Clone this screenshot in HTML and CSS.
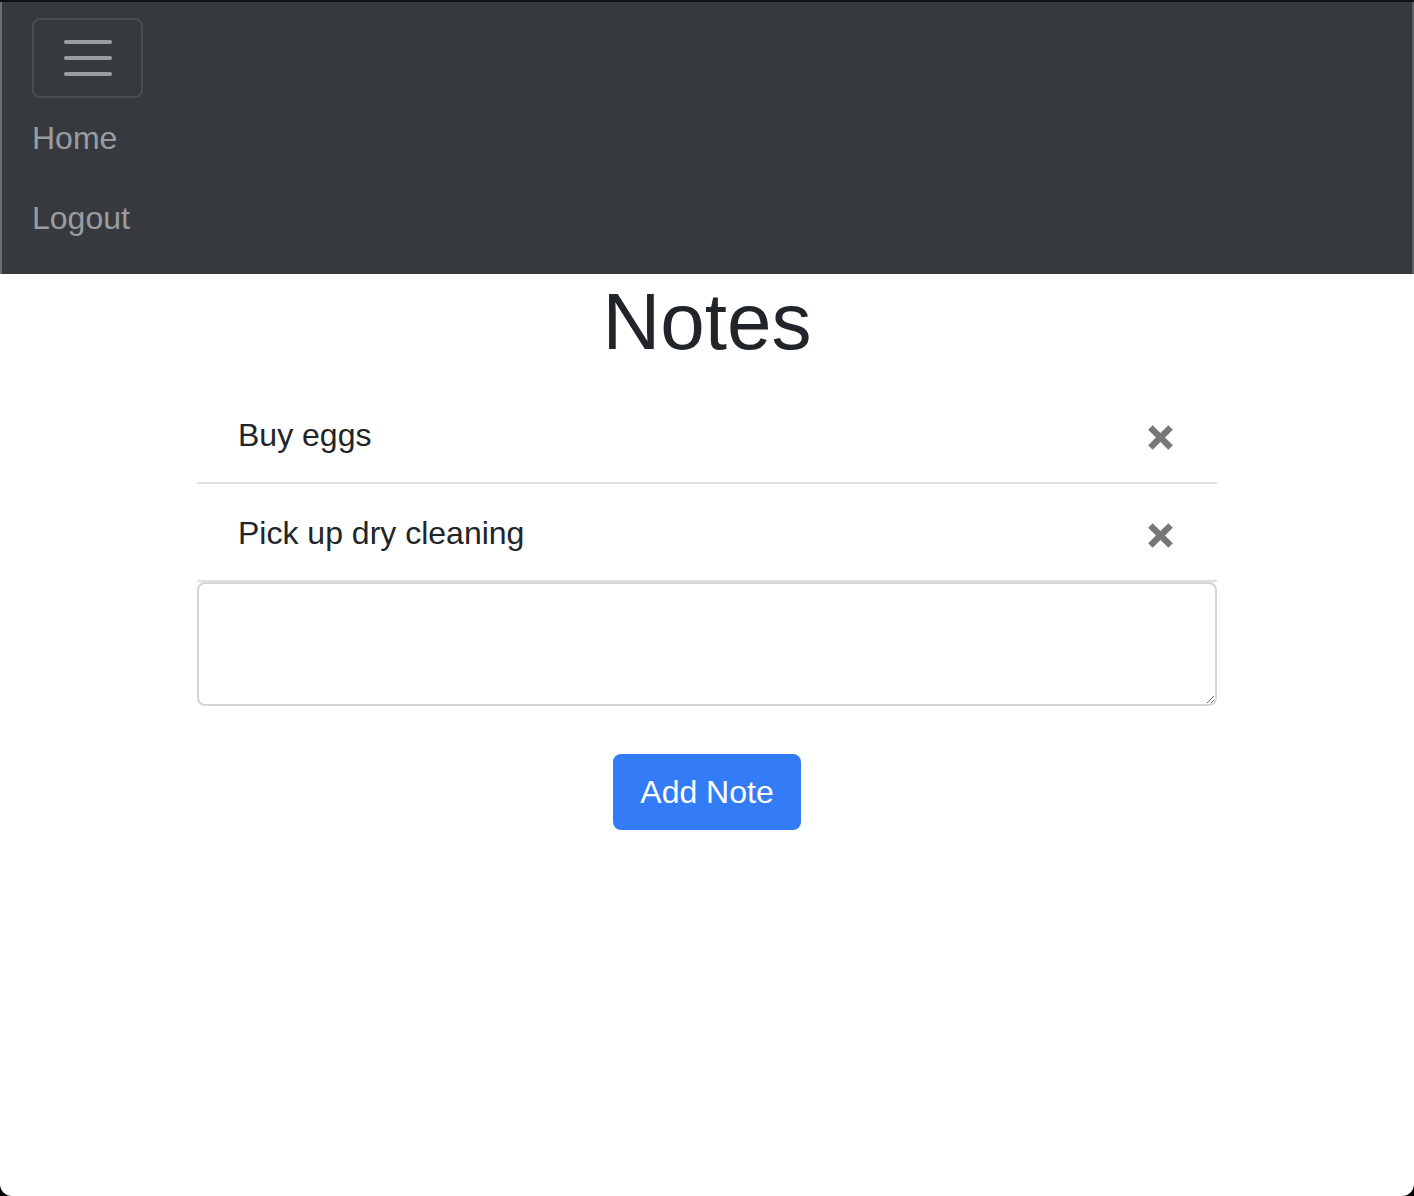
FILE: index.html
```html
<!DOCTYPE html>
<html lang="en">
<head>
<meta charset="utf-8">
<title>Notes</title>
<link rel="stylesheet" href="styles.css">
</head>
<body>
<nav class="navbar">
  <button class="toggler" type="button" aria-label="Toggle navigation">
    <svg class="toggler-icon" viewBox="0 0 30 30" width="60" height="60">
      <path d="M4 7h22M4 15h22M4 23h22" stroke="rgba(255,255,255,0.5)" stroke-width="2" stroke-linecap="round" fill="none"/>
    </svg>
  </button>
  <ul class="nav-list">
    <li><a class="nav-link" href="#">Home</a></li>
    <li><a class="nav-link" href="#">Logout</a></li>
  </ul>
</nav>
<main class="container">
  <h1 class="title">Notes</h1>
  <ul class="notes">
    <li class="note">
      <span>Buy eggs</span>
      <svg class="remove" viewBox="0 0 25 25" width="25" height="25"><path d="M2.4 2.4L22.6 22.6M22.6 2.4L2.4 22.6" stroke="#777" stroke-width="6.4" fill="none"/></svg>
    </li>
    <li class="note">
      <span>Pick up dry cleaning</span>
      <svg class="remove" viewBox="0 0 25 25" width="25" height="25"><path d="M2.4 2.4L22.6 22.6M22.6 2.4L2.4 22.6" stroke="#777" stroke-width="6.4" fill="none"/></svg>
    </li>
  </ul>
  <textarea class="note-input"></textarea>
  <div class="actions">
    <button class="btn-primary" type="button">Add Note</button>
  </div>
</main>
</body>
</html>
```

FILE: styles.css
```css
html {
  background: #000;
  height: 100%;
}
body {
  margin: 0;
  min-height: 100%;
  background: #fff;
  border-radius: 0 0 12px 12px;
  overflow: hidden;
  font-family: "Liberation Sans", Arial, sans-serif;
  font-size: 32px;
  line-height: 48px;
  color: #212529;
}
.navbar {
  background: #363a3f;
  border-top: 2px solid #111;
  padding: 16px 32px;
  box-shadow: inset 2px 0 #6b6f73, inset -2px 0 #5c6064;
}
.toggler {
  display: block;
  width: 111px;
  height: 80px;
  padding: 8px 24px;
  background: transparent;
  border: 2px solid rgba(255,255,255,0.1);
  border-radius: 8px;
  box-sizing: border-box;
}
.toggler-icon {
  display: block;
  margin: 0 auto;
}
.nav-list {
  list-style: none;
  margin: 0;
  padding: 0;
}
.nav-link {
  display: block;
  padding: 16px 0;
  color: #9a9da0;
  text-decoration: none;
}
.container {
  width: 1020px;
  margin: 0 auto;
}
.title {
  margin: 0 0 16px;
  font-size: 80px;
  line-height: 96px;
  font-weight: 500;
  text-align: center;
}
.notes {
  list-style: none;
  margin: 0;
  padding: 0;
}
.note {
  display: flex;
  align-items: center;
  justify-content: space-between;
  padding: 25px 44px 23px 41px;
  border-bottom: 2px solid #e0e0e0;
}
.remove {
  display: block;
  margin-top: 4px;
}
.note-input {
  display: block;
  width: 100%;
  height: 124px;
  box-sizing: border-box;
  margin: 0;
  padding: 12px 24px;
  border: 2px solid #d2d5d9;
  border-radius: 8px;
  font-family: inherit;
  font-size: 32px;
}
.actions {
  display: flex;
  justify-content: center;
  margin-top: 48px;
}
.btn-primary {
  height: 76px;
  padding: 12px 25px;
  border: 2px solid #337cf6;
  border-radius: 8px;
  background: #337cf6;
  color: #fff;
  font-family: inherit;
  font-size: 32px;
  line-height: 48px;
}
```
